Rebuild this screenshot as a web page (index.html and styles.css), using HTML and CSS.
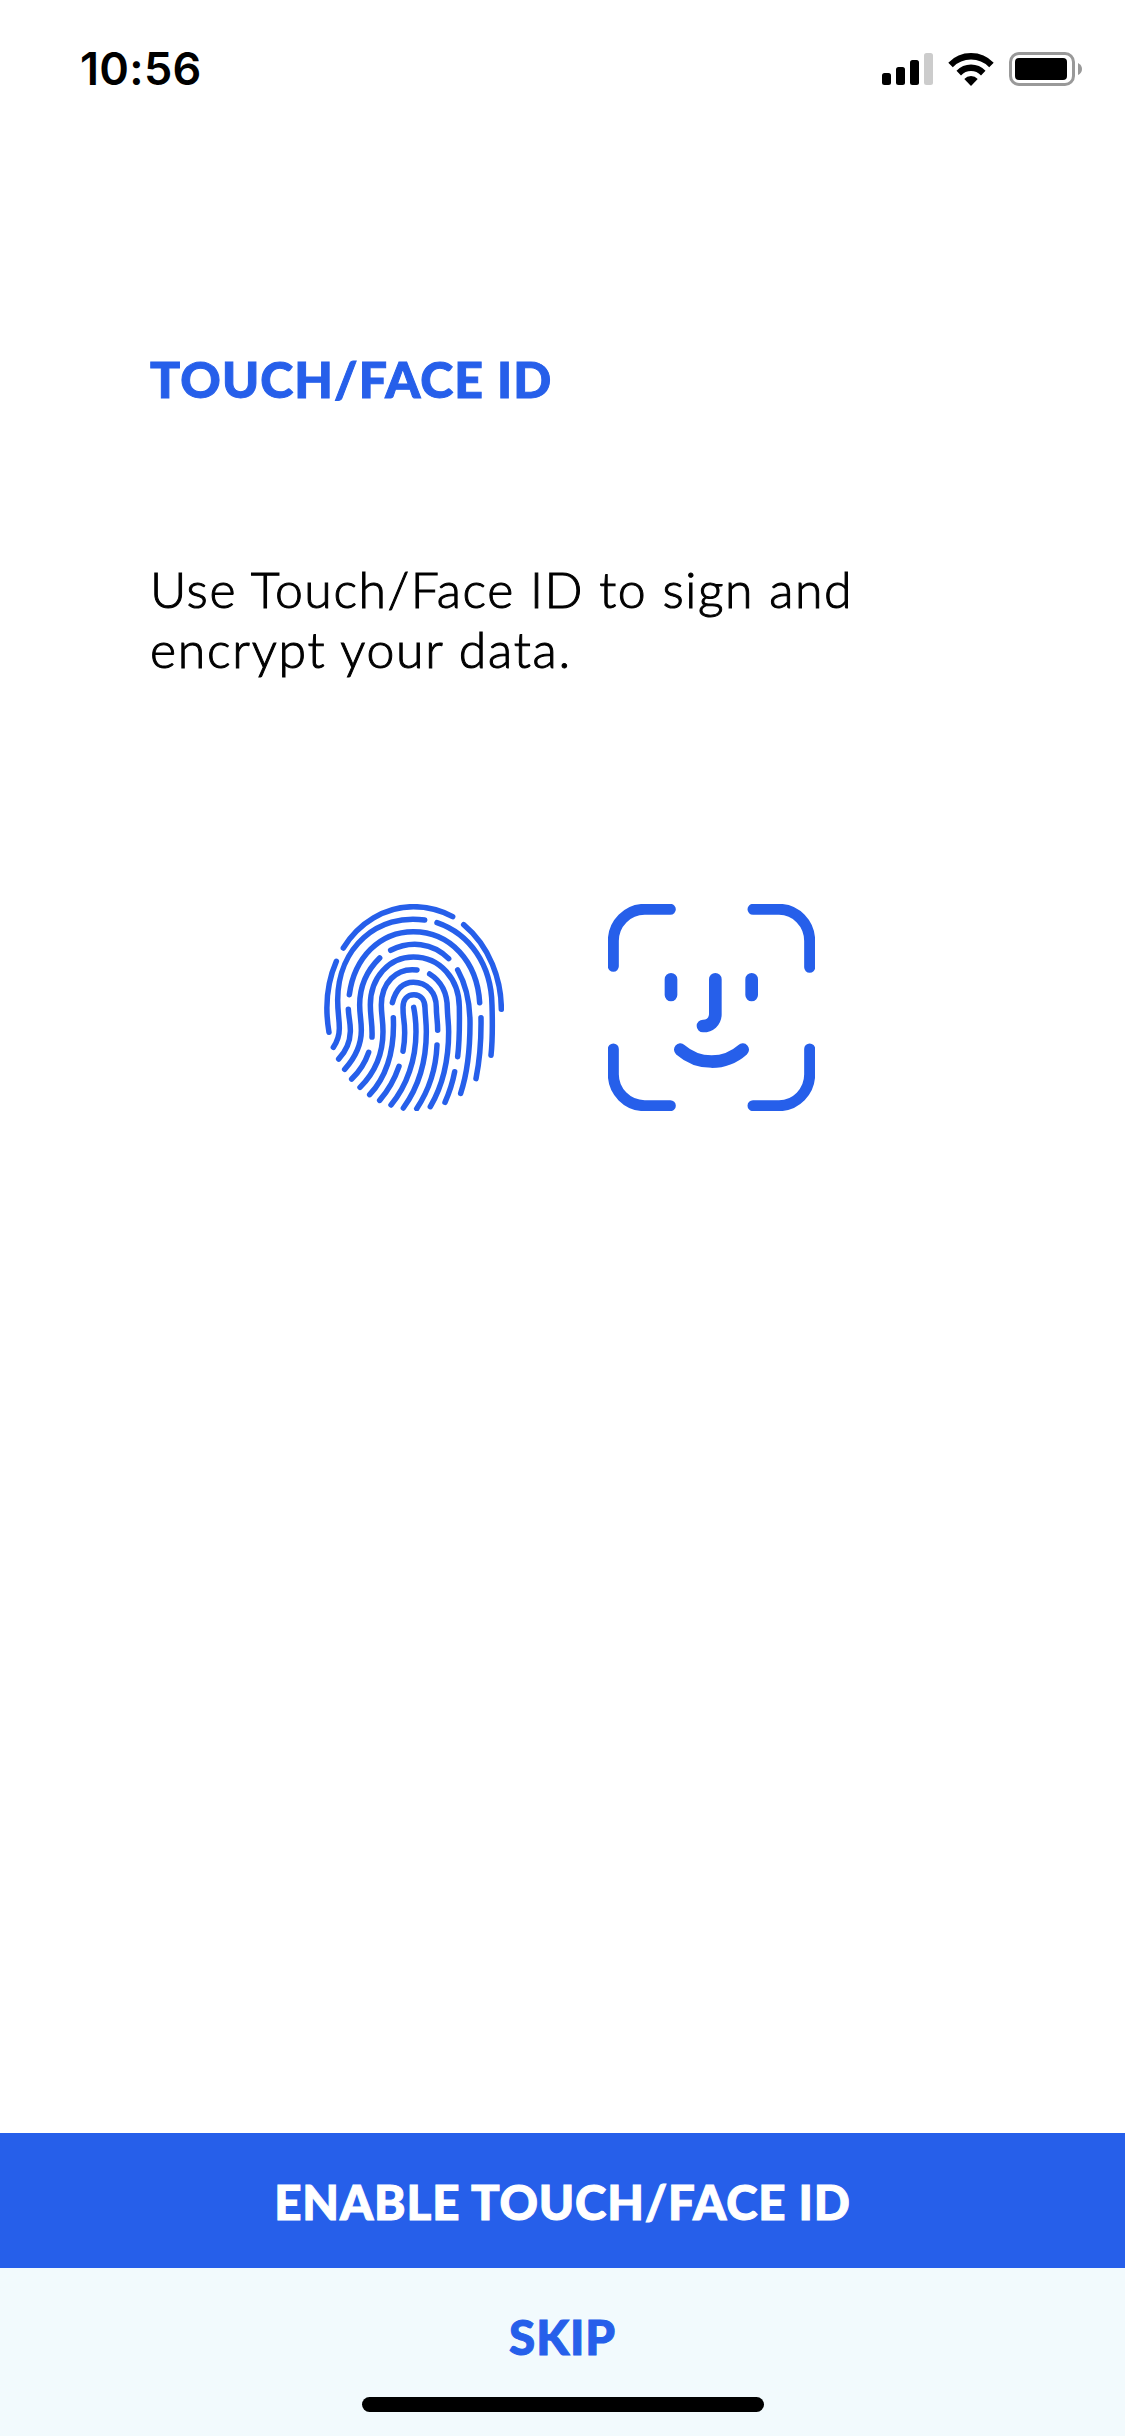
FILE: index.html
```html
<!DOCTYPE html>
<html lang="en">
<head>
<meta charset="utf-8">
<title>Touch/Face ID</title>
<link rel="stylesheet" href="styles.css">
</head>
<body>
<div class="screen">
  <header class="status">
    <span class="time">10:56</span>
    <div class="indicators">
      <svg class="signal" viewBox="0 0 51 33"><rect y="20" width="9" height="12" rx="2.5"/><rect x="14" y="14" width="9" height="18" rx="2.5"/><rect x="28" y="7" width="9" height="25" rx="2.5"/><rect x="42" width="9" height="32" rx="2.5" fill="#ccc"/></svg>
      <svg class="wifi" viewBox="0 0 46 33"><path d="M0.3 9.7Q9.5 0 23 0T45.7 9.7L41.2 14.2Q33.5 6.6 23 6.6T4.8 14.2Z"/><path d="M8.5 17.8Q14.5 11.5 23 11.5T37.5 17.8L33 22.5Q28.8 18.1 23 18.1T13 22.5Z"/><path d="M16.3 26Q19 23 23 23T29.7 26L23 33Z"/></svg>
      <svg class="battery" viewBox="0 0 73 34"><rect x="1.5" y="1.5" width="63" height="31" rx="8.5" fill="none" stroke="#999" stroke-width="3"/><rect x="6" y="6" width="52" height="22" rx="4"/><path d="M69 11Q73 13 73 17T69 23Z" fill="#999"/></svg>
    </div>
  </header>
  <main class="content">
    <h1 class="title">TOUCH/FACE ID</h1>
    <p class="message"><span class="line-one">Use Touch/Face ID to sign and</span><br><span class="line-two">encrypt your data.</span></p>
    <div class="icons">
      <svg class="fingerprint" viewBox="42 42 540 621" fill="none" stroke="#265fea" stroke-width="16.5" stroke-linecap="round">
        <path d="M100 174C146 98 226 50 310 50C353 50 392 60 428 80"/>
        <path d="M79 214C51 278 44 350 57 427"/>
        <path d="M461 104C540 170 574 270 574 358"/>
        <path d="M344 90C205 70 84 170 83 330C83 370 88 385 88 415C88 440 82 455 70 472"/>
        <path d="M381 98C480 132 544 225 546 345C548 410 548 450 543 496"/>
        <path d="M118 314C133 202 210 125 310 125C421 125 502 215 509 338"/>
        <path d="M115 358C116 383 122 401 121 425C120 457 108 484 86 507"/>
        <path d="M513 383C514 450 509 512 498 566"/>
        <path d="M242 181C300 152 367 157 416 206"/>
        <path d="M209 204C167 245 149 295 149 345C149 376 154 390 154 421C154 465 136 503 104 538"/>
        <path d="M443 240C470 288 480 338 480 400C480 480 473 547 452 610"/>
        <path d="M186 441C188 404 181 383 181 345C181 263 237 201 310 201C391 201 447 268 448 350C449 410 449 450 443 500"/>
        <path d="M176 487C165 519 148 545 125 567"/>
        <path d="M321 240C257 232 214 281 214 345C214 375 219 390 219 425C219 490 195 547 150 592"/>
        <path d="M359 252C396 275 412 312 412 356C413 385 416 400 416 425C416 510 396 590 361 650"/>
        <path d="M434 545C428 577 418 607 405 637"/>
        <path d="M247 338C258 297 279 277 310 277C352 277 379 309 379 352C379 381 383 390 383 421"/>
        <path d="M250 383C254 478 230 559 179 614"/>
        <path d="M381 465C378 537 356 602 320 656"/>
        <path d="M279 484C286 445 285 413 281 385C279 373 279 365 279 352C279 329 292 314 312 314C333 314 345 331 345 354C346 380 349 397 349 425C349 513 324 593 280 654"/>
        <path d="M267 529C254 567 235 601 209 631"/>
        <path d="M311 352C316 377 318 401 318 425C318 508 291 587 243 645"/>
      </svg>
      <svg class="face" viewBox="54 42 621 621" fill="none" stroke="#265fea" stroke-width="33" stroke-linecap="round">
        <path d="M70 229V153A94 95 0 0 1 164 58H241M489 58H567A92 95 0 0 1 659 153V232M70 477V553A94 94 0 0 0 164 647H241M489 647H567A92 94 0 0 0 659 553V477"/>
        <path stroke-width="38" d="M243 268V315M485 268V315M376 268V374C375 395 360 408 339 408M271 479C325 526 404 527 458 479"/>
      </svg>
    </div>
  </main>
  <footer class="actions">
    <button class="enable"><span>ENABLE TOUCH/FACE ID</span></button>
    <button class="skip"><span>SKIP</span></button>
    <div class="home-bar"></div>
  </footer>
</div>
</body>
</html>
```
FILE: styles.css
```css
* { box-sizing: border-box; }
body { margin: 0; background: #fff; }
.screen {
  width: 1125px;
  height: 2436px;
  display: flex;
  flex-direction: column;
  font-family: Lato, sans-serif;
}
.status {
  height: 132px;
  padding: 6px 43px 0 80px;
  display: flex;
  justify-content: space-between;
  align-items: center;
}
.time {
  font: 600 45px/54px Inter, sans-serif;
  letter-spacing: 0.3px;
}
.indicators { display: flex; align-items: center; gap: 15px; }
.signal { width: 51px; height: 33px; }
.wifi { width: 46px; height: 33px; }
.battery { width: 73px; height: 34px; }
.content { flex: 1; }
.title {
  margin: 217px 0 0 150px;
  font-size: 50px;
  line-height: 60px;
  font-weight: 900;
  letter-spacing: 1.1px;
  -webkit-text-stroke: 1px currentColor;
  color: #265fea;
  white-space: nowrap;
}
.message {
  margin: 150px 0 0 150px;
  font-size: 50px;
  line-height: 60px;
  font-weight: 300;
  -webkit-text-stroke: 1px currentColor;
  color: #000;
  white-space: nowrap;
}
.line-one { letter-spacing: 1.55px; }
.line-two { letter-spacing: 1.7px; }
.icons {
  display: flex;
  gap: 104px;
  margin: 225px 0 0 324px;
}
.fingerprint { width: 180px; height: 207px; }
.face { width: 207px; height: 207px; }
.actions {
  height: 303px;
  background: #f2fafd;
  display: flex;
  flex-direction: column;
  align-items: center;
}
.enable, .skip {
  width: 100%;
  height: 135px;
  border: 0;
  padding: 3px 0 0;
  font: 900 47.5px/60px Lato, sans-serif;
  letter-spacing: 0.85px;
  -webkit-text-stroke: 1px currentColor;
  color: #fff;
  background: #265fea;
}
.skip {
  height: 129px;
  padding-top: 9px;
  color: #265fea;
  background: transparent;
}
.home-bar {
  width: 402px;
  height: 15px;
  border-radius: 8px;
  background: #000;
}
```
